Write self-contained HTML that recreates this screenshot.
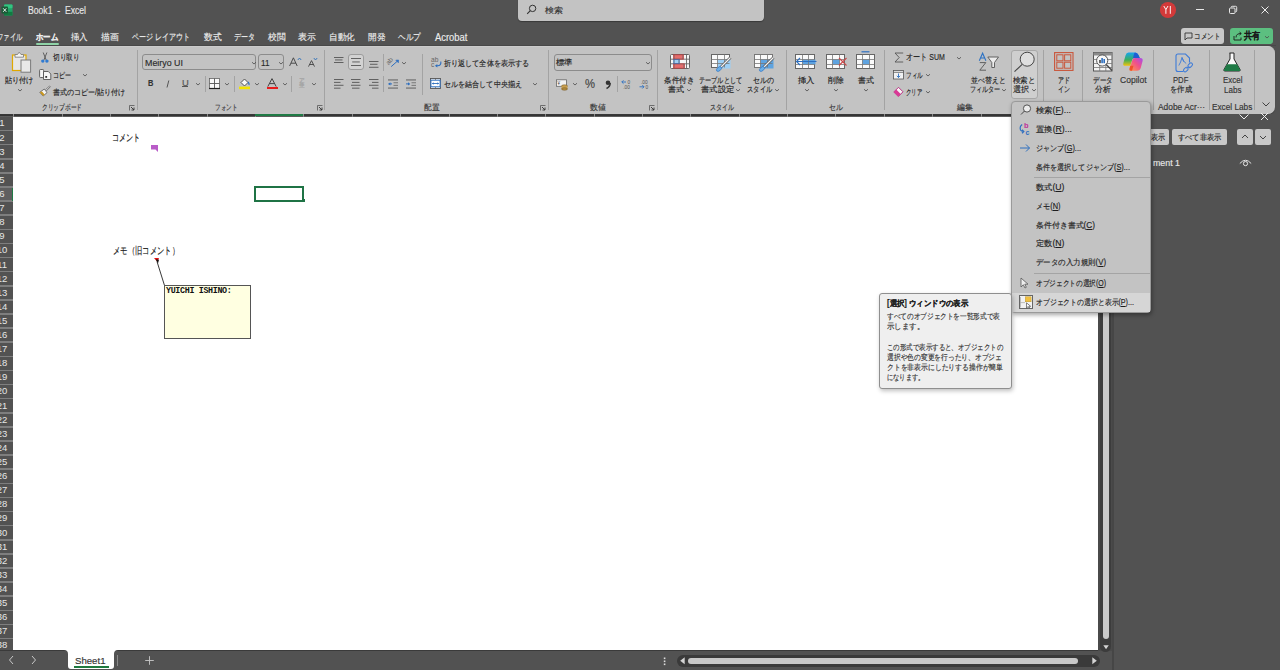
<!DOCTYPE html>
<html><head><meta charset="utf-8">
<style>
*{margin:0;padding:0;box-sizing:border-box}
html,body{width:1280px;height:670px;overflow:hidden;background:#525252;font-family:"Liberation Sans",sans-serif;color:#222}
.a{position:absolute}
.t{position:absolute;white-space:nowrap;transform-origin:0 50%;-webkit-text-stroke:0.15px currentColor}
svg{overflow:visible}
</style></head><body>
<div class="a" style="left:0px;top:0px;width:1280px;height:46px;background:#525252"></div>
<svg class="a" style="left:1px;top:4px;" width="12" height="12" viewBox="0 0 12 12"><rect x="3" y="0.5" width="8.5" height="11" rx="1" fill="#21a366"/>
<rect x="3" y="0.5" width="8.5" height="3.7" rx="1" fill="#33c481"/>
<rect x="3" y="7.8" width="8.5" height="3.7" fill="#107c41"/>
<rect x="0.5" y="2.5" width="6.5" height="7" rx="0.8" fill="#185c37"/>
<path d="M2.2 4.3 L5.3 7.8 M5.3 4.3 L2.2 7.8" stroke="#fff" stroke-width="0.9"/></svg>
<div class="t f" style="left:28.0px;top:5.5px;font-size:10px;line-height:10px;color:#e6e6e6;--w:58.0px;">Book1&nbsp; - &nbsp;Excel</div>
<div class="a" style="left:518px;top:-4px;width:246px;height:25px;background:#c3c3c3;border-radius:4px;box-shadow:0 1px 1px rgba(0,0,0,.3)"></div>
<svg class="a" style="left:526px;top:4px;" width="11" height="11" viewBox="0 0 11 11"><circle cx="6.6" cy="4.4" r="3.2" fill="none" stroke="#333" stroke-width="1"/><path d="M4.3 6.7 L1.2 9.8" stroke="#333" stroke-width="1.1"/></svg>
<div class="t f" style="left:545.0px;top:5.8px;font-size:8.4px;line-height:8.4px;color:#333;--w:18.0px;">検索</div>
<svg class="a" style="left:1159px;top:2px;" width="18" height="18" viewBox="0 0 18 18"><circle cx="9" cy="8" r="8.1" fill="#d33a3a"/></svg>
<svg class="a" style="left:1163px;top:5px;" width="10" height="10" viewBox="0 0 10 10"><path d="M0.8 1 L2.9 4.6 L5 1 M2.9 4.6 V8.8 M7.3 1 V8.8" fill="none" stroke="#fff" stroke-width="0.95"/></svg>
<div class="a" style="left:1196px;top:9px;width:8px;height:1px;background:#e8e8e8"></div>
<svg class="a" style="left:1228px;top:5px;" width="10" height="10" viewBox="0 0 10 10"><rect x="1.5" y="3" width="5.5" height="5.5" rx="1" fill="none" stroke="#e8e8e8" stroke-width="1"/><path d="M3.2 2.5 V2.3 a1 1 0 0 1 1-1 h3.5 a1 1 0 0 1 1 1 v3.5 a1 1 0 0 1 -1 1 h-0.3" fill="none" stroke="#e8e8e8" stroke-width="1"/></svg>
<svg class="a" style="left:1260px;top:5px;" width="10" height="10" viewBox="0 0 10 10"><path d="M1.5 1.5 L8.5 8.5 M8.5 1.5 L1.5 8.5" stroke="#eee" stroke-width="1"/></svg>
<div class="t f" style="left:-3.0px;top:33.0px;font-size:9px;line-height:9px;color:#ececec;--w:25.5px;">ファイル</div>
<div class="t f" style="left:35.6px;top:33.0px;font-size:9px;line-height:9px;color:#ececec;font-weight:bold;--w:22.2px;">ホーム</div>
<div class="t f" style="left:70.9px;top:33.0px;font-size:9px;line-height:9px;color:#ececec;--w:16.9px;">挿入</div>
<div class="t f" style="left:100.9px;top:33.0px;font-size:9px;line-height:9px;color:#ececec;--w:17.6px;">描画</div>
<div class="t f" style="left:131.6px;top:33.0px;font-size:9px;line-height:9px;color:#ececec;--w:58.2px;">ページ レイアウト</div>
<div class="t f" style="left:204.0px;top:33.0px;font-size:9px;line-height:9px;color:#ececec;--w:17.6px;">数式</div>
<div class="t f" style="left:234.2px;top:33.0px;font-size:9px;line-height:9px;color:#ececec;--w:21.1px;">データ</div>
<div class="t f" style="left:268.4px;top:33.0px;font-size:9px;line-height:9px;color:#ececec;--w:17.5px;">校閲</div>
<div class="t f" style="left:298.4px;top:33.0px;font-size:9px;line-height:9px;color:#ececec;--w:17.8px;">表示</div>
<div class="t f" style="left:329.4px;top:33.0px;font-size:9px;line-height:9px;color:#ececec;--w:25.8px;">自動化</div>
<div class="t f" style="left:368.4px;top:33.0px;font-size:9px;line-height:9px;color:#ececec;--w:17.2px;">開発</div>
<div class="t f" style="left:397.8px;top:33.0px;font-size:9px;line-height:9px;color:#ececec;--w:22.5px;">ヘルプ</div>
<div class="t f" style="left:434.8px;top:32.5px;font-size:10px;line-height:10px;color:#ececec;--w:32.4px;">Acrobat</div>
<div class="a" style="left:36px;top:43px;width:23px;height:1.6px;background:#8fd3a7;border-radius:1px"></div>
<div class="a" style="left:1181px;top:28px;width:43px;height:16px;background:#c8c8c8;border-radius:3px"></div>
<svg class="a" style="left:1184px;top:32px;" width="9" height="9" viewBox="0 0 9 9"><path d="M1 1 H8 V6 H3 L1 8 Z" fill="none" stroke="#333" stroke-width="0.9"/></svg>
<div class="t f" style="left:1194.0px;top:31.8px;font-size:8.4px;line-height:8.4px;color:#222;--w:26.0px;">コメント</div>
<div class="a" style="left:1230px;top:28px;width:43px;height:16px;background:#5cbf80;border-radius:3px"></div>
<svg class="a" style="left:1233px;top:31px;" width="10" height="10" viewBox="0 0 10 10"><path d="M1 5 V9 H8 V6.5" fill="none" stroke="#1a1a1a" stroke-width="0.9"/><path d="M3 6.5 C3 3.5 5 2.5 8 2.5 M6.5 1 L8.3 2.5 L6.5 4" fill="none" stroke="#1a1a1a" stroke-width="0.9"/></svg>
<div class="t f" style="left:1244.0px;top:31.2px;font-size:9.5px;line-height:9.5px;color:#1a1a1a;font-weight:bold;--w:16.0px;">共有</div>
<svg class="a" style="left:1264.0px;top:34.5px;" width="6" height="4" viewBox="0 0 6 4"><path d="M1 1.2 L3.0 3 L5 1.2" fill="none" stroke="#4a4a4a" stroke-width="0.8"/></svg>
<div class="a" style="left:0px;top:45px;width:1276px;height:1px;background:#484848"></div>
<div class="a" style="left:-8px;top:46px;width:1283px;height:68px;background:#c3c3c3;border-top:1px solid #cbcbcb;border-radius:7px;box-shadow:0 1px 1px rgba(0,0,0,.25)"></div>
<div class="a" style="left:137px;top:50px;width:1px;height:60px;background:#a3a3a3"></div>
<div class="a" style="left:324px;top:50px;width:1px;height:60px;background:#a3a3a3"></div>
<div class="a" style="left:548px;top:50px;width:1px;height:60px;background:#a3a3a3"></div>
<div class="a" style="left:657px;top:50px;width:1px;height:60px;background:#a3a3a3"></div>
<div class="a" style="left:786px;top:50px;width:1px;height:60px;background:#a3a3a3"></div>
<div class="a" style="left:884px;top:50px;width:1px;height:60px;background:#a3a3a3"></div>
<div class="a" style="left:1043px;top:50px;width:1px;height:60px;background:#a3a3a3"></div>
<div class="a" style="left:1082px;top:50px;width:1px;height:60px;background:#a3a3a3"></div>
<div class="a" style="left:1153px;top:50px;width:1px;height:60px;background:#a3a3a3"></div>
<div class="a" style="left:1209px;top:50px;width:1px;height:60px;background:#a3a3a3"></div>
<div class="a" style="left:1254px;top:50px;width:1px;height:60px;background:#a3a3a3"></div>
<div class="a" style="left:383px;top:54px;width:1px;height:17px;background:#a3a3a3"></div>
<div class="a" style="left:383px;top:76px;width:1px;height:16px;background:#a3a3a3"></div>
<div class="a" style="left:422px;top:54px;width:1px;height:41px;background:#a3a3a3"></div>
<div class="a" style="left:205px;top:76px;width:1px;height:16px;background:#a3a3a3"></div>
<div class="a" style="left:234px;top:76px;width:1px;height:16px;background:#a3a3a3"></div>
<div class="a" style="left:291px;top:76px;width:1px;height:16px;background:#a3a3a3"></div>
<div class="a" style="left:617px;top:76px;width:1px;height:16px;background:#a3a3a3"></div>
<div class="t f" style="left:42.2px;top:102.8px;font-size:8.4px;line-height:8.4px;color:#333;--w:40.1px;">クリップボード</div>
<div class="t f" style="left:214.5px;top:102.8px;font-size:8.4px;line-height:8.4px;color:#333;--w:22.3px;">フォント</div>
<div class="t f" style="left:423.7px;top:102.8px;font-size:8.4px;line-height:8.4px;color:#333;--w:15.3px;">配置</div>
<div class="t f" style="left:590.0px;top:102.8px;font-size:8.4px;line-height:8.4px;color:#333;--w:15.7px;">数値</div>
<div class="t f" style="left:710.2px;top:102.8px;font-size:8.4px;line-height:8.4px;color:#333;--w:24.0px;">スタイル</div>
<div class="t f" style="left:829.0px;top:102.8px;font-size:8.4px;line-height:8.4px;color:#333;--w:13.9px;">セル</div>
<div class="t f" style="left:956.6px;top:102.8px;font-size:8.4px;line-height:8.4px;color:#333;--w:15.9px;">編集</div>
<div class="t f" style="left:1158.1px;top:102.8px;font-size:8.4px;line-height:8.4px;color:#333;--w:47.1px;">Adobe Acr···</div>
<div class="t f" style="left:1211.9px;top:102.8px;font-size:8.4px;line-height:8.4px;color:#333;--w:40.3px;">Excel Labs</div>
<svg class="a" style="left:129px;top:104.5px;" width="6" height="6" viewBox="0 0 6 6"><path d="M0.5 5.5 V0.5 H5.5" fill="none" stroke="#555" stroke-width="0.8"/><path d="M2 2 L5 5 M5 2.5 V5 H2.5" fill="none" stroke="#333" stroke-width="0.9"/></svg>
<svg class="a" style="left:317px;top:104.5px;" width="6" height="6" viewBox="0 0 6 6"><path d="M0.5 5.5 V0.5 H5.5" fill="none" stroke="#555" stroke-width="0.8"/><path d="M2 2 L5 5 M5 2.5 V5 H2.5" fill="none" stroke="#333" stroke-width="0.9"/></svg>
<svg class="a" style="left:540px;top:104.5px;" width="6" height="6" viewBox="0 0 6 6"><path d="M0.5 5.5 V0.5 H5.5" fill="none" stroke="#555" stroke-width="0.8"/><path d="M2 2 L5 5 M5 2.5 V5 H2.5" fill="none" stroke="#333" stroke-width="0.9"/></svg>
<svg class="a" style="left:649px;top:104.5px;" width="6" height="6" viewBox="0 0 6 6"><path d="M0.5 5.5 V0.5 H5.5" fill="none" stroke="#555" stroke-width="0.8"/><path d="M2 2 L5 5 M5 2.5 V5 H2.5" fill="none" stroke="#333" stroke-width="0.9"/></svg>
<svg class="a" style="left:1261.5px;top:101.5px;" width="8" height="5" viewBox="0 0 8 5"><path d="M0.5 0.5 L4 4 L7.5 0.5" fill="none" stroke="#333" stroke-width="0.9"/></svg>
<svg class="a" style="left:11px;top:51px;" width="21" height="22" viewBox="0 0 21 22"><rect x="1.5" y="4" width="13.5" height="15.5" fill="#e6e6e6" stroke="#e0a800" stroke-width="1.2"/>
<path d="M4 6.2 V3.5 H6.5 L8.2 1.2 L10 3.5 H12.5 V6.2 Z" fill="#f4f4f4" stroke="#777" stroke-width="0.8"/>
<rect x="10" y="9" width="9.6" height="12.2" fill="#e8e8e8" stroke="#7a7a7a" stroke-width="1"/></svg>
<div class="t f" style="left:5.1px;top:76.1px;font-size:8.4px;line-height:8.4px;color:#1e1e1e;--w:28.4px;">貼り付け</div>
<svg class="a" style="left:17.4px;top:88.3px;" width="6" height="4" viewBox="0 0 6 4"><path d="M1 1.2 L3.0 3 L5 1.2" fill="none" stroke="#4a4a4a" stroke-width="0.8"/></svg>
<svg class="a" style="left:40px;top:52px;" width="10" height="11" viewBox="0 0 10 11"><path d="M3.2 0.5 L6.2 8 M6.9 0.5 L3.9 8" stroke="#555" stroke-width="0.9"/><circle cx="2.8" cy="9.1" r="1.7" fill="#2f7ad1"/><circle cx="6.9" cy="9.1" r="1.7" fill="#2f7ad1"/></svg>
<div class="t f" style="left:53.3px;top:53.4px;font-size:8.4px;line-height:8.4px;color:#1e1e1e;--w:26.7px;">切り取り</div>
<svg class="a" style="left:39px;top:69px;" width="13" height="11" viewBox="0 0 13 11"><rect x="0.6" y="0.5" width="4" height="8" rx="0.8" fill="#f6f6f6" stroke="#555" stroke-width="0.9"/><path d="M4.5 2.5 H9.3 L11.8 5 V10.5 H4.5 Z" fill="#f6f6f6" stroke="#555" stroke-width="0.9"/><rect x="6.3" y="7" width="1.8" height="1.8" fill="#333"/></svg>
<div class="t f" style="left:52.8px;top:70.8px;font-size:8.4px;line-height:8.4px;color:#1e1e1e;--w:18.1px;">コピー</div>
<svg class="a" style="left:82.0px;top:72.5px;" width="6" height="4" viewBox="0 0 6 4"><path d="M1 1.2 L3.0 3 L5 1.2" fill="none" stroke="#4a4a4a" stroke-width="0.8"/></svg>
<svg class="a" style="left:39px;top:85px;" width="12" height="12" viewBox="0 0 12 12"><path d="M0.8 7.3 L5.3 4 L8 7.6 L4.2 11 Z" fill="#f5f5f5" stroke="#555" stroke-width="0.8"/><path d="M0.9 7.5 L2.8 6.2 L5.6 9.6 L4.2 11 Z" fill="#c8961e"/><path d="M6.3 5 L10.5 1 L11.3 1.8 L7.2 6" fill="#fafafa" stroke="#555" stroke-width="0.8"/></svg>
<div class="t f" style="left:53.3px;top:87.7px;font-size:8.4px;line-height:8.4px;color:#1e1e1e;--w:72.1px;">書式のコピー/貼り付け</div>
<div class="a" style="left:142.4px;top:54.3px;width:114.1px;height:16.2px;border:1px solid #8c8c8c;border-radius:3px"></div>
<div class="t f" style="left:144.8px;top:57.6px;font-size:9.4px;line-height:9.4px;color:#2a2a2a;--w:37.9px;">Meiryo UI</div>
<svg class="a" style="left:250.5px;top:60.5px;" width="6" height="4" viewBox="0 0 6 4"><path d="M1 1.2 L3.0 3 L5 1.2" fill="none" stroke="#4a4a4a" stroke-width="0.8"/></svg>
<div class="a" style="left:258.3px;top:54.3px;width:26.2px;height:16.2px;border:1px solid #8c8c8c;border-radius:3px"></div>
<div class="t f" style="left:260.6px;top:57.6px;font-size:9.4px;line-height:9.4px;color:#2a2a2a;--w:8.4px;">11</div>
<svg class="a" style="left:277.5px;top:60.5px;" width="6" height="4" viewBox="0 0 6 4"><path d="M1 1.2 L3.0 3 L5 1.2" fill="none" stroke="#4a4a4a" stroke-width="0.8"/></svg>
<svg class="a" style="left:289px;top:57px;" width="9" height="10" viewBox="0 0 9 10"><path d="M0.6 9 L4.4 0.8 L8.2 9 M2 6.2 H6.8" fill="none" stroke="#444" stroke-width="0.95"/></svg>
<svg class="a" style="left:297px;top:57px;" width="5" height="4" viewBox="0 0 5 4"><path d="M0.8 3 L2.5 1 L4.2 3" fill="none" stroke="#2f6fb8" stroke-width="0.9"/></svg>
<svg class="a" style="left:308px;top:59.5px;" width="7" height="7" viewBox="0 0 7 7"><path d="M0.5 6.6 L3.5 0.6 L6.5 6.6 M1.6 4.5 H5.4" fill="none" stroke="#444" stroke-width="0.9"/></svg>
<svg class="a" style="left:313px;top:57px;" width="5" height="4" viewBox="0 0 5 4"><path d="M0.8 1 L2.5 3 L4.2 1" fill="none" stroke="#2f6fb8" stroke-width="0.9"/></svg>
<div class="t f" style="left:148.0px;top:79.1px;font-size:8.4px;line-height:8.4px;color:#333;font-weight:bold;--w:5.4px;">B</div>
<svg class="a" style="left:165px;top:79.5px;" width="6" height="8" viewBox="0 0 6 8"><path d="M3.8 0.5 L2 7.5" stroke="#555" stroke-width="1"/></svg>
<div class="t f" style="left:181.5px;top:78.5px;font-size:8.5px;line-height:8.5px;color:#555;--w:6.8px;">U</div>
<div class="a" style="left:181.5px;top:86.3px;width:6.8px;height:0.9px;background:#555"></div>
<svg class="a" style="left:194.7px;top:81.5px;" width="6" height="4" viewBox="0 0 6 4"><path d="M1 1.2 L3.0 3 L5 1.2" fill="none" stroke="#4a4a4a" stroke-width="0.8"/></svg>
<svg class="a" style="left:209px;top:78px;" width="11" height="11" viewBox="0 0 11 11"><rect x="0.5" y="0.5" width="10" height="10" fill="#fafafa" stroke="#555" stroke-width="0.7"/><path d="M5.5 0.5 V10.5 M0.5 5.5 H10.5" stroke="#555" stroke-width="0.9"/><path d="M0 10.5 H11" stroke="#222" stroke-width="1.2"/></svg>
<svg class="a" style="left:223.5px;top:81.5px;" width="6" height="4" viewBox="0 0 6 4"><path d="M1 1.2 L3.0 3 L5 1.2" fill="none" stroke="#4a4a4a" stroke-width="0.8"/></svg>
<svg class="a" style="left:239px;top:77px;" width="12" height="13" viewBox="0 0 12 13"><path d="M2 5.5 L5.5 2 L9 5.5 L5.5 9 Z" fill="#f8f8f8" stroke="#444" stroke-width="0.9"/><path d="M9 5 Q10.5 6.5 10 8" fill="none" stroke="#2d6fc0" stroke-width="1.2"/><rect x="0" y="9.6" width="11" height="2.6" fill="#f4e400"/></svg>
<svg class="a" style="left:254.0px;top:81.5px;" width="6" height="4" viewBox="0 0 6 4"><path d="M1 1.2 L3.0 3 L5 1.2" fill="none" stroke="#4a4a4a" stroke-width="0.8"/></svg>
<svg class="a" style="left:267px;top:77.5px;" width="10" height="9" viewBox="0 0 10 9"><path d="M0.8 8.6 L5 0.6 L9.2 8.6 M2.4 5.6 H7.6" fill="none" stroke="#444" stroke-width="1"/></svg>
<div class="a" style="left:266.6px;top:86.6px;width:11.1px;height:2.6px;background:#e81c1c"></div>
<svg class="a" style="left:281.5px;top:81.5px;" width="6" height="4" viewBox="0 0 6 4"><path d="M1 1.2 L3.0 3 L5 1.2" fill="none" stroke="#4a4a4a" stroke-width="0.8"/></svg>
<div class="t f" style="left:298.9px;top:78.0px;font-size:5px;line-height:5px;color:#9c9c9c;--w:5.7px;">ア</div>
<div class="t f" style="left:298.9px;top:83.2px;font-size:5.5px;line-height:5.5px;color:#9c9c9c;--w:5.7px;">亜</div>
<svg class="a" style="left:311.0px;top:81.5px;" width="6" height="4" viewBox="0 0 6 4"><path d="M1 1.2 L3.0 3 L5 1.2" fill="none" stroke="#4a4a4a" stroke-width="0.8"/></svg>
<svg class="a" style="left:334px;top:57px;" width="10" height="7" viewBox="0 0 10 7"><rect x="0" y="0" width="9.5" height="0.9" fill="#555"/><rect x="1" y="2.5" width="7.5" height="0.9" fill="#555"/><rect x="0" y="5" width="9.5" height="0.9" fill="#555"/></svg>
<div class="a" style="left:348.3px;top:54.1px;width:15.6px;height:16.2px;background:#d2d2d2;border:1px solid #9c9c9c;border-radius:3px"></div>
<svg class="a" style="left:351px;top:58px;" width="10" height="9" viewBox="0 0 10 9"><rect x="0" y="0" width="10" height="0.9" fill="#555"/><rect x="1.2" y="3.5" width="7.6" height="0.9" fill="#555"/><rect x="0" y="7" width="10" height="0.9" fill="#555"/></svg>
<svg class="a" style="left:369px;top:61px;" width="10" height="7" viewBox="0 0 10 7"><rect x="0" y="0" width="9.5" height="0.9" fill="#555"/><rect x="1" y="2.8" width="7.5" height="0.9" fill="#555"/><rect x="0" y="5.8" width="9.5" height="0.9" fill="#555"/></svg>
<svg class="a" style="left:386px;top:55px;" width="14" height="13" viewBox="0 0 14 13"><text x="0" y="0" font-size="6.5" font-family="Liberation Sans" fill="#666" transform="translate(2.8,10.2) rotate(-50)">ab</text><path d="M5.2 11.6 L12 5.6" stroke="#2d6fc0" stroke-width="1"/><path d="M9.8 5.2 L12.6 5 L12.4 7.8 Z" fill="#2d6fc0" stroke="#2d6fc0" stroke-width="0.6"/></svg>
<svg class="a" style="left:401.3px;top:60.5px;" width="6" height="4" viewBox="0 0 6 4"><path d="M1 1.2 L3.0 3 L5 1.2" fill="none" stroke="#4a4a4a" stroke-width="0.8"/></svg>
<svg class="a" style="left:334px;top:78.5px;" width="10" height="10" viewBox="0 0 10 10"><rect x="0" y="0.0" width="9.5" height="0.9" fill="#555"/><rect x="0" y="2.9" width="6.5" height="0.9" fill="#555"/><rect x="0" y="5.8" width="9.5" height="0.9" fill="#555"/><rect x="0" y="8.7" width="6.5" height="0.9" fill="#555"/></svg>
<svg class="a" style="left:351px;top:78.5px;" width="10" height="10" viewBox="0 0 10 10"><rect x="0.0" y="0.0" width="9.5" height="0.9" fill="#555"/><rect x="1" y="2.9" width="7.5" height="0.9" fill="#555"/><rect x="0.0" y="5.8" width="9.5" height="0.9" fill="#555"/><rect x="1" y="8.7" width="7.5" height="0.9" fill="#555"/></svg>
<svg class="a" style="left:369px;top:78.5px;" width="10" height="10" viewBox="0 0 10 10"><rect x="0.0" y="0.0" width="9.5" height="0.9" fill="#555"/><rect x="3.0" y="2.9" width="6.5" height="0.9" fill="#555"/><rect x="0.0" y="5.8" width="9.5" height="0.9" fill="#555"/><rect x="3.0" y="8.7" width="6.5" height="0.9" fill="#555"/></svg>
<svg class="a" style="left:388px;top:78.5px;" width="11" height="10" viewBox="0 0 11 10"><rect x="0" y="0.5" width="10" height="0.9" fill="#555"/><rect x="5.5" y="3.4" width="4.5" height="0.8" fill="#666"/><rect x="5.5" y="5.9" width="4.5" height="0.8" fill="#666"/><rect x="0" y="8.6" width="10" height="0.9" fill="#555"/><path d="M0.6 4.9 H4" stroke="#2d6fc0" stroke-width="1"/><path d="M0.2 4.9 L2.4 3.2 V6.6 Z" fill="#2d6fc0"/></svg>
<svg class="a" style="left:405.5px;top:78.5px;" width="11" height="10" viewBox="0 0 11 10"><rect x="0" y="0.5" width="10" height="0.9" fill="#555"/><rect x="5.5" y="3.4" width="4.5" height="0.8" fill="#666"/><rect x="5.5" y="5.9" width="4.5" height="0.8" fill="#666"/><rect x="0" y="8.6" width="10" height="0.9" fill="#555"/><path d="M0 4.9 H3.4" stroke="#2d6fc0" stroke-width="1"/><path d="M4.2 4.9 L2 3.2 V6.6 Z" fill="#2d6fc0"/></svg>
<svg class="a" style="left:431px;top:56px;" width="12" height="12" viewBox="0 0 12 12"><text x="0" y="6" font-size="6.6" font-family="Liberation Sans" fill="#666">ab</text><text x="0" y="11" font-size="6.6" font-family="Liberation Sans" fill="#666">c</text><path d="M9.8 5.5 Q10.5 9.5 6.5 9.8 H4.8" fill="none" stroke="#2d6fc0" stroke-width="1.1"/><path d="M4 9.8 L6.3 8 V11.6 Z" fill="#2d6fc0"/></svg>
<div class="t f" style="left:443.5px;top:58.6px;font-size:8.4px;line-height:8.4px;color:#1e1e1e;--w:85.0px;">折り返して全体を表示する</div>
<svg class="a" style="left:430px;top:78px;" width="11" height="11" viewBox="0 0 11 11"><rect x="0.5" y="0.5" width="10" height="10" fill="#f4f4f4" stroke="#555" stroke-width="0.9"/><rect x="0.9" y="2.2" width="9.2" height="6.6" fill="#fff" stroke="#2d6fc0" stroke-width="1"/><path d="M5.5 0.5 V2 M5.5 9 V10.5" stroke="#555" stroke-width="0.6"/><path d="M2.3 5.5 H8.7" stroke="#2d6fc0" stroke-width="0.9"/><path d="M2 5.5 L3.6 4.2 V6.8 Z M9 5.5 L7.4 4.2 V6.8 Z" fill="#2d6fc0"/></svg>
<div class="t f" style="left:443.5px;top:79.7px;font-size:8.4px;line-height:8.4px;color:#1e1e1e;--w:77.8px;">セルを結合して中央揃え</div>
<svg class="a" style="left:532.0px;top:82px;" width="6" height="4" viewBox="0 0 6 4"><path d="M1 1.2 L3.0 3 L5 1.2" fill="none" stroke="#4a4a4a" stroke-width="0.8"/></svg>
<div class="a" style="left:554.2px;top:54px;width:98.2px;height:16.6px;border:1px solid #8c8c8c;border-radius:3px"></div>
<div class="t f" style="left:556.0px;top:58.1px;font-size:8.4px;line-height:8.4px;color:#1e1e1e;--w:16.6px;">標準</div>
<svg class="a" style="left:645.0px;top:60.5px;" width="6" height="4" viewBox="0 0 6 4"><path d="M1 1.2 L3.0 3 L5 1.2" fill="none" stroke="#4a4a4a" stroke-width="0.8"/></svg>
<svg class="a" style="left:556px;top:79px;" width="13" height="11" viewBox="0 0 13 11"><rect x="0.5" y="0.8" width="10" height="6.5" fill="#f2f2f2" stroke="#666" stroke-width="0.8"/><text x="1.5" y="6" font-size="4.5" font-family="Liberation Sans" fill="#444">¥</text><ellipse cx="8.5" cy="7" rx="3" ry="1.2" fill="#c8a050" stroke="#6b5020" stroke-width="0.5"/><rect x="5.5" y="7" width="6" height="3" fill="#c8a050"/><ellipse cx="8.5" cy="10" rx="3" ry="1.2" fill="#b8903f" stroke="#6b5020" stroke-width="0.5"/></svg>
<svg class="a" style="left:571.5px;top:81.5px;" width="6" height="4" viewBox="0 0 6 4"><path d="M1 1.2 L3.0 3 L5 1.2" fill="none" stroke="#4a4a4a" stroke-width="0.8"/></svg>
<div class="t f" style="left:584.9px;top:77.7px;font-size:12px;line-height:12px;color:#444;--w:10.0px;">%</div>
<svg class="a" style="left:605px;top:80px;" width="6" height="9" viewBox="0 0 6 9"><circle cx="3" cy="2.8" r="2.3" fill="#333"/><path d="M5.2 3 Q5.2 6.8 1.5 8.5" fill="none" stroke="#333" stroke-width="1.5"/></svg>
<svg class="a" style="left:620.8px;top:79px;" width="12" height="10" viewBox="0 0 12 10"><path d="M0.8 3 H5 M2.5 1.3 L0.8 3 L2.5 4.7" fill="none" stroke="#2d6fc0" stroke-width="0.9"/><text x="6.5" y="4.5" font-size="4.8" font-family="Liberation Sans" fill="#555">0</text><text x="2.2" y="9.8" font-size="4.8" font-family="Liberation Sans" fill="#555">.00</text></svg>
<svg class="a" style="left:639px;top:79px;" width="12" height="10" viewBox="0 0 12 10"><text x="2" y="4.5" font-size="4.8" font-family="Liberation Sans" fill="#555">.00</text><path d="M0.5 7.8 H5 M3.3 6.1 L5 7.8 L3.3 9.5" fill="none" stroke="#2d6fc0" stroke-width="0.9"/><text x="6.5" y="9.8" font-size="4.8" font-family="Liberation Sans" fill="#555">0</text></svg>
<svg class="a" style="left:670px;top:54px;" width="20" height="15" viewBox="0 0 20 15"><rect x="0.5" y="0.5" width="19" height="14" rx="1" fill="#f6f6f6" stroke="#666" stroke-width="1"/><rect x="4" y="1" width="9" height="4" fill="#e46c6c"/><rect x="4" y="5.5" width="5" height="4" fill="#9dd0f5"/><rect x="4" y="10" width="10" height="4" fill="#e46c6c"/><path d="M4 0.5 V14.5 M13 0.5 V5 M9 5 V10 M14 10 V14.5 M16.5 0.5 V14.5 M0.5 5.2 H19.5 M0.5 9.8 H19.5" stroke="#666" stroke-width="0.9"/><rect x="3.5" y="0.8" width="10" height="4.4" fill="none" stroke="#c23b3b" stroke-width="0.7"/><rect x="3.5" y="9.8" width="11" height="4.4" fill="none" stroke="#c23b3b" stroke-width="0.7"/><rect x="3.8" y="5.3" width="5.4" height="4.4" fill="none" stroke="#2d6fc0" stroke-width="0.6"/></svg>
<div class="t f" style="left:664.3px;top:75.6px;font-size:8.4px;line-height:8.4px;color:#1e1e1e;--w:30.2px;">条件付き</div>
<div class="t f" style="left:668.0px;top:85.4px;font-size:8.4px;line-height:8.4px;color:#1e1e1e;--w:16.0px;">書式</div>
<svg class="a" style="left:685.8px;top:87.8px;" width="6" height="4" viewBox="0 0 6 4"><path d="M1 1.2 L3.0 3 L5 1.2" fill="none" stroke="#4a4a4a" stroke-width="0.8"/></svg>
<svg class="a" style="left:711px;top:54px;" width="21" height="17" viewBox="0 0 21 17"><rect x="0.5" y="0.5" width="18" height="13" fill="#fafafa" stroke="#666" stroke-width="1"/><rect x="6.5" y="5.5" width="13.0" height="9.0" fill="#9ccff5"/><path d="M6.5 0.5 V13.5" stroke="#777" stroke-width="0.8"/><path d="M13.5 0.5 V13.5" stroke="#777" stroke-width="0.8"/><path d="M0.5 5.5 H18.5" stroke="#777" stroke-width="0.8"/><path d="M0.5 9.5 H18.5" stroke="#777" stroke-width="0.8"/><path d="M19.5 3.5 L9.5 13.5" stroke="#555" stroke-width="2.6"/><path d="M19.5 3.5 L9.5 13.5" stroke="#f4f4f4" stroke-width="1.3"/><ellipse cx="8" cy="15" rx="3" ry="1.8" transform="rotate(-40 8 15)" fill="#6ab0e8" stroke="#2d6fc0" stroke-width="0.6"/></svg>
<div class="t f" style="left:699.3px;top:75.6px;font-size:8.4px;line-height:8.4px;color:#1e1e1e;--w:43.1px;">テーブルとして</div>
<div class="t f" style="left:700.8px;top:85.4px;font-size:8.4px;line-height:8.4px;color:#1e1e1e;--w:33.4px;">書式設定</div>
<svg class="a" style="left:735.0px;top:87.8px;" width="6" height="4" viewBox="0 0 6 4"><path d="M1 1.2 L3.0 3 L5 1.2" fill="none" stroke="#4a4a4a" stroke-width="0.8"/></svg>
<svg class="a" style="left:754px;top:54px;" width="21" height="17" viewBox="0 0 21 17"><rect x="0.5" y="0.5" width="18" height="13" fill="#fafafa" stroke="#777" stroke-width="1"/><rect x="6.5" y="5.5" width="13.0" height="9.0" fill="#5ea3e0"/><path d="M6.5 0.5 V13.5" stroke="#777" stroke-width="0.8"/><path d="M13.5 0.5 V13.5" stroke="#777" stroke-width="0.8"/><path d="M0.5 5.5 H18.5" stroke="#777" stroke-width="0.8"/><path d="M0.5 9.5 H18.5" stroke="#777" stroke-width="0.8"/><path d="M19.5 3.5 L9.5 13.5" stroke="#555" stroke-width="2.6"/><path d="M19.5 3.5 L9.5 13.5" stroke="#f4f4f4" stroke-width="1.3"/><ellipse cx="8" cy="15" rx="3" ry="1.8" transform="rotate(-40 8 15)" fill="#6ab0e8" stroke="#2d6fc0" stroke-width="0.6"/></svg>
<div class="t f" style="left:753.1px;top:75.6px;font-size:8.4px;line-height:8.4px;color:#1e1e1e;--w:20.9px;">セルの</div>
<div class="t f" style="left:746.9px;top:85.4px;font-size:8.4px;line-height:8.4px;color:#1e1e1e;--w:25.1px;">スタイル</div>
<svg class="a" style="left:773.8px;top:87.8px;" width="6" height="4" viewBox="0 0 6 4"><path d="M1 1.2 L3.0 3 L5 1.2" fill="none" stroke="#4a4a4a" stroke-width="0.8"/></svg>
<svg class="a" style="left:795px;top:54px;" width="22" height="15" viewBox="0 0 22 15"><rect x="0.5" y="0.5" width="19" height="14" fill="#fafafa" stroke="#666" stroke-width="1"/><rect x="7.5" y="5.5" width="13.0" height="5.0" fill="#5ea3e0"/><path d="M7.5 0.5 V14.5" stroke="#777" stroke-width="0.8"/><path d="M13.5 0.5 V14.5" stroke="#777" stroke-width="0.8"/><path d="M0.5 5.5 H19.5" stroke="#777" stroke-width="0.8"/><path d="M0.5 10.5 H19.5" stroke="#777" stroke-width="0.8"/><path d="M21.5 7.5 H1.5 M5 4 L1.5 7.5 L5 11" fill="none" stroke="#2d6fc0" stroke-width="1.1"/></svg>
<div class="t f" style="left:797.8px;top:76.3px;font-size:8.4px;line-height:8.4px;color:#1e1e1e;--w:16.6px;">挿入</div>
<svg class="a" style="left:803.5px;top:88.3px;" width="6" height="4" viewBox="0 0 6 4"><path d="M1 1.2 L3.0 3 L5 1.2" fill="none" stroke="#4a4a4a" stroke-width="0.8"/></svg>
<svg class="a" style="left:825.6px;top:54px;" width="21" height="15" viewBox="0 0 21 15"><rect x="0.5" y="0.5" width="18" height="14" fill="#fafafa" stroke="#666" stroke-width="1"/><rect x="6.5" y="5.5" width="7.0" height="5.0" fill="#5ea3e0"/><path d="M6.5 0.5 V14.5" stroke="#777" stroke-width="0.8"/><path d="M13.5 0.5 V14.5" stroke="#777" stroke-width="0.8"/><path d="M0.5 5.5 H18.5" stroke="#777" stroke-width="0.8"/><path d="M0.5 10.5 H18.5" stroke="#777" stroke-width="0.8"/><path d="M13 4 L20.5 11.5 M20.5 4 L13 11.5" stroke="#c94848" stroke-width="1.1"/></svg>
<div class="t f" style="left:828.3px;top:76.3px;font-size:8.4px;line-height:8.4px;color:#1e1e1e;--w:15.6px;">削除</div>
<svg class="a" style="left:833.0px;top:88.3px;" width="6" height="4" viewBox="0 0 6 4"><path d="M1 1.2 L3.0 3 L5 1.2" fill="none" stroke="#4a4a4a" stroke-width="0.8"/></svg>
<svg class="a" style="left:856px;top:51px;" width="19" height="18" viewBox="0 0 19 18"><g transform="translate(0,3)"><rect x="0.5" y="0.5" width="18" height="14" fill="#fafafa" stroke="#666" stroke-width="1"/><rect x="6.5" y="5.5" width="7.0" height="5.0" fill="#5ea3e0"/><path d="M6.5 0.5 V14.5" stroke="#777" stroke-width="0.8"/><path d="M13.5 0.5 V14.5" stroke="#777" stroke-width="0.8"/><path d="M0.5 5.5 H18.5" stroke="#777" stroke-width="0.8"/><path d="M0.5 10.5 H18.5" stroke="#777" stroke-width="0.8"/></g><path d="M5.5 0.8 H13.5" stroke="#2d6fc0" stroke-width="1.2"/></svg>
<div class="t f" style="left:857.5px;top:76.3px;font-size:8.4px;line-height:8.4px;color:#1e1e1e;--w:15.8px;">書式</div>
<svg class="a" style="left:862.5px;top:88.3px;" width="6" height="4" viewBox="0 0 6 4"><path d="M1 1.2 L3.0 3 L5 1.2" fill="none" stroke="#4a4a4a" stroke-width="0.8"/></svg>
<svg class="a" style="left:893.5px;top:51.5px;" width="10" height="11" viewBox="0 0 10 11"><path d="M9.2 1 H1 L5.2 5.5 L1 10 H9.2" fill="none" stroke="#555" stroke-width="0.9"/></svg>
<div class="t f" style="left:906.4px;top:53.3px;font-size:8.8px;line-height:8.8px;color:#262626;--w:38.9px;">オート SUM</div>
<svg class="a" style="left:956.0px;top:55.5px;" width="6" height="4" viewBox="0 0 6 4"><path d="M1 1.2 L3.0 3 L5 1.2" fill="none" stroke="#4a4a4a" stroke-width="0.8"/></svg>
<svg class="a" style="left:893px;top:70px;" width="11" height="10" viewBox="0 0 11 10"><rect x="0.5" y="0.5" width="10" height="8.5" fill="#f2f2f2" stroke="#555" stroke-width="0.8"/><path d="M0.5 2.3 H10.5" stroke="#555" stroke-width="0.8"/><path d="M5.5 3.5 V7.5 M3.8 5.8 L5.5 7.5 L7.2 5.8" fill="none" stroke="#2d6fc0" stroke-width="0.9"/></svg>
<div class="t f" style="left:906.3px;top:70.8px;font-size:8.4px;line-height:8.4px;color:#1e1e1e;--w:16.8px;">フィル</div>
<svg class="a" style="left:925.4px;top:73px;" width="6" height="4" viewBox="0 0 6 4"><path d="M1 1.2 L3.0 3 L5 1.2" fill="none" stroke="#4a4a4a" stroke-width="0.8"/></svg>
<svg class="a" style="left:893px;top:86px;" width="11" height="11" viewBox="0 0 11 11"><path d="M0.8 6 L5.5 1.3 L10 5.8 L5.3 10.5 Z" fill="#f4f4f4" stroke="#b8207a" stroke-width="0.9"/><path d="M0.8 6 L3.2 3.6 L7.7 8.1 L5.3 10.5 Z" fill="#d93a96"/></svg>
<div class="t f" style="left:906.3px;top:87.8px;font-size:8.4px;line-height:8.4px;color:#1e1e1e;--w:16.2px;">クリア</div>
<svg class="a" style="left:925.4px;top:90px;" width="6" height="4" viewBox="0 0 6 4"><path d="M1 1.2 L3.0 3 L5 1.2" fill="none" stroke="#4a4a4a" stroke-width="0.8"/></svg>
<svg class="a" style="left:978px;top:52px;" width="22" height="19" viewBox="0 0 22 19"><path d="M1.3 8.7 L4.6 1.2 L7.9 8.7 M2.5 6 H6.7" fill="none" stroke="#2d72c4" stroke-width="1.1"/><path d="M1.8 10.6 H7.8 L1.8 18.2 H8" fill="none" stroke="#555" stroke-width="0.9"/><path d="M9.8 5 H20.5 L16.5 10.5 V15.5 L13.8 15.5 V10.5 Z" fill="#ececec" stroke="#555" stroke-width="0.9"/></svg>
<div class="t f" style="left:971.3px;top:76.1px;font-size:8.4px;line-height:8.4px;color:#1e1e1e;--w:34.5px;">並べ替えと</div>
<div class="t f" style="left:969.8px;top:85.4px;font-size:8.4px;line-height:8.4px;color:#1e1e1e;--w:30.5px;">フィルター</div>
<svg class="a" style="left:1001.3px;top:87.8px;" width="6" height="4" viewBox="0 0 6 4"><path d="M1 1.2 L3.0 3 L5 1.2" fill="none" stroke="#4a4a4a" stroke-width="0.8"/></svg>
<div class="a" style="left:1010.5px;top:49.7px;width:27.8px;height:49.5px;background:#cfcfcf;border:1px solid #a8a8a8;border-radius:3px"></div>
<svg class="a" style="left:1013px;top:50px;" width="23" height="23" viewBox="0 0 23 23"><circle cx="14.2" cy="9.2" r="7" fill="#dedede" stroke="#444" stroke-width="1"/><path d="M9.2 14.3 L1.5 21.6" stroke="#444" stroke-width="1.1"/></svg>
<div class="t f" style="left:1013.0px;top:76.1px;font-size:8.4px;line-height:8.4px;color:#1e1e1e;--w:22.4px;">検索と</div>
<div class="t f" style="left:1012.5px;top:85.4px;font-size:8.4px;line-height:8.4px;color:#1e1e1e;--w:16.2px;">選択</div>
<svg class="a" style="left:1030.8px;top:87.8px;" width="6" height="4" viewBox="0 0 6 4"><path d="M1 1.2 L3.0 3 L5 1.2" fill="none" stroke="#4a4a4a" stroke-width="0.8"/></svg>
<svg class="a" style="left:1054px;top:52px;" width="20" height="19" viewBox="0 0 20 19"><rect x="0.6" y="0.6" width="18.4" height="17.8" fill="none" stroke="#c9553a" stroke-width="1.1"/><rect x="2.8" y="2.8" width="6.2" height="6" fill="none" stroke="#c9553a" stroke-width="1"/><rect x="10.6" y="2.8" width="6.2" height="6" fill="none" stroke="#c9553a" stroke-width="1"/><rect x="2.8" y="10.2" width="6.2" height="6" fill="none" stroke="#c9553a" stroke-width="1"/><rect x="10.6" y="10.2" width="6.2" height="6" fill="none" stroke="#c9553a" stroke-width="1"/></svg>
<div class="t f" style="left:1057.8px;top:76.1px;font-size:8.4px;line-height:8.4px;color:#1e1e1e;--w:12.1px;">アド</div>
<div class="t f" style="left:1057.8px;top:85.4px;font-size:8.4px;line-height:8.4px;color:#1e1e1e;--w:12.1px;">イン</div>
<svg class="a" style="left:1092.8px;top:52px;" width="20" height="20" viewBox="0 0 20 20"><rect x="0.5" y="0.5" width="18.5" height="18.5" fill="#f4f4f4" stroke="#555" stroke-width="1"/><rect x="0.5" y="0.5" width="18.5" height="3" fill="#8a8a8a"/><path d="M6.7 3.5 V19 M12.8 3.5 V19 M0.5 7.5 H19 M0.5 11.5 H19 M0.5 15.5 H19" stroke="#777" stroke-width="0.8"/><circle cx="9.2" cy="8.5" r="5.6" fill="#f8f8f8" stroke="#555" stroke-width="1"/><rect x="6.2" y="8" width="1.6" height="3.2" fill="#444"/><rect x="8.3" y="6" width="1.6" height="5.2" fill="#2d6fc0"/><rect x="10.4" y="7" width="1.6" height="4.2" fill="#2d6fc0"/><path d="M13.2 12.5 L19 18.5" stroke="#444" stroke-width="1.3"/></svg>
<div class="t f" style="left:1092.7px;top:76.1px;font-size:8.4px;line-height:8.4px;color:#1e1e1e;--w:19.5px;">データ</div>
<div class="t f" style="left:1094.7px;top:85.4px;font-size:8.4px;line-height:8.4px;color:#1e1e1e;--w:15.5px;">分析</div>
<svg class="a" style="left:1123px;top:52px;" width="20" height="19" viewBox="0 0 20 19"><defs><linearGradient id="cg1" x1="0" y1="0" x2="0" y2="1"><stop offset="0" stop-color="#15a4f2"/><stop offset="0.55" stop-color="#3cae5c"/><stop offset="1" stop-color="#f3c20c"/></linearGradient>
<linearGradient id="cg2" x1="1" y1="0" x2="0" y2="1"><stop offset="0" stop-color="#a24cf0"/><stop offset="0.45" stop-color="#f0508a"/><stop offset="1" stop-color="#ff9a48"/></linearGradient></defs>
<path d="M5.5 0.5 H12 Q14.5 0.5 15.5 3 L16.8 6 H11.2 Q9.8 6 9.3 7.5 L7.3 13.8 H2 Q-0.2 13.8 0.3 11.2 L2.5 3.5 Q3.3 0.5 5.5 0.5 Z" fill="url(#cg1)"/>
<path d="M12 0.5 Q14.5 0.5 15.5 3 L16.8 6 H11.2 Q10.2 6 9.8 6.8 L11 2 Q11.5 0.5 12 0.5 Z" fill="#1d55d6" opacity="0.9"/>
<path d="M12 6 H17.2 Q20.2 6 19.6 9 L17.8 15.8 Q17 18.8 14 18.8 H7.8 Q6 18.8 6.5 16.8 L9.5 7.8 Q10 6 12 6 Z" fill="url(#cg2)"/>
<path d="M7.3 13.8 H10.5 L9 18.8 H7.8 Q6 18.8 6.5 16.8 Z" fill="#f0502a"/></svg>
<div class="t f" style="left:1119.6px;top:75.2px;font-size:9.5px;line-height:9.5px;color:#333;--w:26.6px;">Copilot</div>
<svg class="a" style="left:1174.5px;top:53px;" width="19" height="20" viewBox="0 0 19 20"><path d="M8.5 18.5 H3 Q1 18.5 1 16.5 V3 Q1 1 3 1 H10.5 L14.5 5 V9.5" fill="none" stroke="#3d7bd8" stroke-width="1.1"/><path d="M3.8 12.5 Q5.8 9.5 7 4.5 Q7.8 8.5 11.2 10.5 M7 4.5 L9 9" fill="none" stroke="#3d7bd8" stroke-width="0.9"/><rect x="-2.6" y="-1.6" width="5.2" height="3.2" rx="1.6" transform="translate(15.2 12.2) rotate(-45)" fill="none" stroke="#3d7bd8" stroke-width="1"/><rect x="-2.6" y="-1.6" width="5.2" height="3.2" rx="1.6" transform="translate(10.8 16.6) rotate(-45)" fill="none" stroke="#3d7bd8" stroke-width="1"/><path d="M11.8 15.6 L14.2 13.2" stroke="#3d7bd8" stroke-width="1"/></svg>
<div class="t f" style="left:1173.3px;top:75.2px;font-size:9.5px;line-height:9.5px;color:#333;--w:15.3px;">PDF</div>
<div class="t f" style="left:1169.8px;top:85.4px;font-size:8.4px;line-height:8.4px;color:#1e1e1e;--w:21.9px;">を作成</div>
<svg class="a" style="left:1223px;top:52px;" width="18" height="20" viewBox="0 0 18 20"><path d="M6.5 1 H11 V7 L17 17.5 Q17.8 19 16 19 H2 Q0.2 19 1 17.5 L7 7 V1" fill="#fafafa" stroke="#222" stroke-width="1"/><path d="M4 12.3 H14 L17 17.5 Q17.8 19 16 19 H2 Q0.2 19 1 17.5 Z" fill="#1e7a45"/></svg>
<div class="t f" style="left:1222.6px;top:75.2px;font-size:9.5px;line-height:9.5px;color:#333;--w:19.5px;">Excel</div>
<div class="t f" style="left:1223.6px;top:84.8px;font-size:9.5px;line-height:9.5px;color:#333;--w:17.4px;">Labs</div>
<div class="a" style="left:0px;top:113.8px;width:1098px;height:3.2px;background:linear-gradient(#3a3a3a 0,#333 60%,#7a7a7a 100%)"></div>
<div class="a" style="left:12.5px;top:114px;width:1px;height:3px;background:#8a8a8a"></div>
<div class="a" style="left:61.5px;top:114px;width:1px;height:3px;background:#8a8a8a"></div>
<div class="a" style="left:109.5px;top:114px;width:1px;height:3px;background:#8a8a8a"></div>
<div class="a" style="left:157.5px;top:114px;width:1px;height:3px;background:#8a8a8a"></div>
<div class="a" style="left:206.5px;top:114px;width:1px;height:3px;background:#8a8a8a"></div>
<div class="a" style="left:254.5px;top:114px;width:1px;height:3px;background:#8a8a8a"></div>
<div class="a" style="left:302.5px;top:114px;width:1px;height:3px;background:#8a8a8a"></div>
<div class="a" style="left:351.5px;top:114px;width:1px;height:3px;background:#8a8a8a"></div>
<div class="a" style="left:399.5px;top:114px;width:1px;height:3px;background:#8a8a8a"></div>
<div class="a" style="left:448.5px;top:114px;width:1px;height:3px;background:#8a8a8a"></div>
<div class="a" style="left:496.5px;top:114px;width:1px;height:3px;background:#8a8a8a"></div>
<div class="a" style="left:544.5px;top:114px;width:1px;height:3px;background:#8a8a8a"></div>
<div class="a" style="left:593.5px;top:114px;width:1px;height:3px;background:#8a8a8a"></div>
<div class="a" style="left:641.5px;top:114px;width:1px;height:3px;background:#8a8a8a"></div>
<div class="a" style="left:689.5px;top:114px;width:1px;height:3px;background:#8a8a8a"></div>
<div class="a" style="left:738.5px;top:114px;width:1px;height:3px;background:#8a8a8a"></div>
<div class="a" style="left:786.5px;top:114px;width:1px;height:3px;background:#8a8a8a"></div>
<div class="a" style="left:834.5px;top:114px;width:1px;height:3px;background:#8a8a8a"></div>
<div class="a" style="left:883.5px;top:114px;width:1px;height:3px;background:#8a8a8a"></div>
<div class="a" style="left:931.5px;top:114px;width:1px;height:3px;background:#8a8a8a"></div>
<div class="a" style="left:980.5px;top:114px;width:1px;height:3px;background:#8a8a8a"></div>
<div class="a" style="left:1028.5px;top:114px;width:1px;height:3px;background:#8a8a8a"></div>
<div class="a" style="left:1076.5px;top:114px;width:1px;height:3px;background:#8a8a8a"></div>
<div class="a" style="left:254.7px;top:114.3px;width:48.7px;height:2px;background:#1f7a45"></div>
<div class="a" style="left:0px;top:117px;width:13px;height:533px;background:#525252"></div>
<div class="a" style="left:0px;top:129.81px;width:13px;height:1.5px;background:#7e7e7e"></div>
<div class="a" style="left:-8.5px;top:116.40px;width:21px;height:13.11px;text-align:center;font-size:9.5px;line-height:13.11px;color:#e6e6e6;overflow:hidden;clip-path:inset(0 0 0 8.5px)">1</div>
<div class="a" style="left:0px;top:143.92000000000002px;width:13px;height:1.5px;background:#7e7e7e"></div>
<div class="a" style="left:-8.5px;top:130.51px;width:21px;height:13.11px;text-align:center;font-size:9.5px;line-height:13.11px;color:#e6e6e6;overflow:hidden;clip-path:inset(0 0 0 8.5px)">2</div>
<div class="a" style="left:0px;top:158.02999999999997px;width:13px;height:1.5px;background:#7e7e7e"></div>
<div class="a" style="left:-8.5px;top:144.62px;width:21px;height:13.11px;text-align:center;font-size:9.5px;line-height:13.11px;color:#e6e6e6;overflow:hidden;clip-path:inset(0 0 0 8.5px)">3</div>
<div class="a" style="left:0px;top:172.14px;width:13px;height:1.5px;background:#7e7e7e"></div>
<div class="a" style="left:-8.5px;top:158.73px;width:21px;height:13.11px;text-align:center;font-size:9.5px;line-height:13.11px;color:#e6e6e6;overflow:hidden;clip-path:inset(0 0 0 8.5px)">4</div>
<div class="a" style="left:0px;top:186.25px;width:13px;height:1.5px;background:#7e7e7e"></div>
<div class="a" style="left:-8.5px;top:172.84px;width:21px;height:13.11px;text-align:center;font-size:9.5px;line-height:13.11px;color:#e6e6e6;overflow:hidden;clip-path:inset(0 0 0 8.5px)">5</div>
<div class="a" style="left:0px;top:187.55px;width:13px;height:14.11px;background:#5f5f5f"></div>
<div class="a" style="left:0px;top:200.36px;width:13px;height:1.5px;background:#7e7e7e"></div>
<div class="a" style="left:-8.5px;top:186.95px;width:21px;height:13.11px;text-align:center;font-size:9.5px;line-height:13.11px;color:#e6e6e6;overflow:hidden;clip-path:inset(0 0 0 8.5px)">6</div>
<div class="a" style="left:0px;top:214.46999999999997px;width:13px;height:1.5px;background:#7e7e7e"></div>
<div class="a" style="left:-8.5px;top:201.06px;width:21px;height:13.11px;text-align:center;font-size:9.5px;line-height:13.11px;color:#e6e6e6;overflow:hidden;clip-path:inset(0 0 0 8.5px)">7</div>
<div class="a" style="left:0px;top:228.57999999999998px;width:13px;height:1.5px;background:#7e7e7e"></div>
<div class="a" style="left:-8.5px;top:215.17px;width:21px;height:13.11px;text-align:center;font-size:9.5px;line-height:13.11px;color:#e6e6e6;overflow:hidden;clip-path:inset(0 0 0 8.5px)">8</div>
<div class="a" style="left:0px;top:242.69px;width:13px;height:1.5px;background:#7e7e7e"></div>
<div class="a" style="left:-8.5px;top:229.28px;width:21px;height:13.11px;text-align:center;font-size:9.5px;line-height:13.11px;color:#e6e6e6;overflow:hidden;clip-path:inset(0 0 0 8.5px)">9</div>
<div class="a" style="left:0px;top:256.8px;width:13px;height:1.5px;background:#7e7e7e"></div>
<div class="a" style="left:-8.5px;top:243.39px;width:21px;height:13.11px;text-align:center;font-size:9.5px;line-height:13.11px;color:#e6e6e6;overflow:hidden;clip-path:inset(0 0 0 8.5px)">10</div>
<div class="a" style="left:0px;top:270.91px;width:13px;height:1.5px;background:#7e7e7e"></div>
<div class="a" style="left:-8.5px;top:257.50px;width:21px;height:13.11px;text-align:center;font-size:9.5px;line-height:13.11px;color:#e6e6e6;overflow:hidden;clip-path:inset(0 0 0 8.5px)">11</div>
<div class="a" style="left:0px;top:285.02px;width:13px;height:1.5px;background:#7e7e7e"></div>
<div class="a" style="left:-8.5px;top:271.61px;width:21px;height:13.11px;text-align:center;font-size:9.5px;line-height:13.11px;color:#e6e6e6;overflow:hidden;clip-path:inset(0 0 0 8.5px)">12</div>
<div class="a" style="left:0px;top:299.13px;width:13px;height:1.5px;background:#7e7e7e"></div>
<div class="a" style="left:-8.5px;top:285.72px;width:21px;height:13.11px;text-align:center;font-size:9.5px;line-height:13.11px;color:#e6e6e6;overflow:hidden;clip-path:inset(0 0 0 8.5px)">13</div>
<div class="a" style="left:0px;top:313.24px;width:13px;height:1.5px;background:#7e7e7e"></div>
<div class="a" style="left:-8.5px;top:299.83px;width:21px;height:13.11px;text-align:center;font-size:9.5px;line-height:13.11px;color:#e6e6e6;overflow:hidden;clip-path:inset(0 0 0 8.5px)">14</div>
<div class="a" style="left:0px;top:327.34999999999997px;width:13px;height:1.5px;background:#7e7e7e"></div>
<div class="a" style="left:-8.5px;top:313.94px;width:21px;height:13.11px;text-align:center;font-size:9.5px;line-height:13.11px;color:#e6e6e6;overflow:hidden;clip-path:inset(0 0 0 8.5px)">15</div>
<div class="a" style="left:0px;top:341.46px;width:13px;height:1.5px;background:#7e7e7e"></div>
<div class="a" style="left:-8.5px;top:328.05px;width:21px;height:13.11px;text-align:center;font-size:9.5px;line-height:13.11px;color:#e6e6e6;overflow:hidden;clip-path:inset(0 0 0 8.5px)">16</div>
<div class="a" style="left:0px;top:355.57px;width:13px;height:1.5px;background:#7e7e7e"></div>
<div class="a" style="left:-8.5px;top:342.16px;width:21px;height:13.11px;text-align:center;font-size:9.5px;line-height:13.11px;color:#e6e6e6;overflow:hidden;clip-path:inset(0 0 0 8.5px)">17</div>
<div class="a" style="left:0px;top:369.68px;width:13px;height:1.5px;background:#7e7e7e"></div>
<div class="a" style="left:-8.5px;top:356.27px;width:21px;height:13.11px;text-align:center;font-size:9.5px;line-height:13.11px;color:#e6e6e6;overflow:hidden;clip-path:inset(0 0 0 8.5px)">18</div>
<div class="a" style="left:0px;top:383.79px;width:13px;height:1.5px;background:#7e7e7e"></div>
<div class="a" style="left:-8.5px;top:370.38px;width:21px;height:13.11px;text-align:center;font-size:9.5px;line-height:13.11px;color:#e6e6e6;overflow:hidden;clip-path:inset(0 0 0 8.5px)">19</div>
<div class="a" style="left:0px;top:397.9px;width:13px;height:1.5px;background:#7e7e7e"></div>
<div class="a" style="left:-8.5px;top:384.49px;width:21px;height:13.11px;text-align:center;font-size:9.5px;line-height:13.11px;color:#e6e6e6;overflow:hidden;clip-path:inset(0 0 0 8.5px)">20</div>
<div class="a" style="left:0px;top:412.01px;width:13px;height:1.5px;background:#7e7e7e"></div>
<div class="a" style="left:-8.5px;top:398.60px;width:21px;height:13.11px;text-align:center;font-size:9.5px;line-height:13.11px;color:#e6e6e6;overflow:hidden;clip-path:inset(0 0 0 8.5px)">21</div>
<div class="a" style="left:0px;top:426.12px;width:13px;height:1.5px;background:#7e7e7e"></div>
<div class="a" style="left:-8.5px;top:412.71px;width:21px;height:13.11px;text-align:center;font-size:9.5px;line-height:13.11px;color:#e6e6e6;overflow:hidden;clip-path:inset(0 0 0 8.5px)">22</div>
<div class="a" style="left:0px;top:440.22999999999996px;width:13px;height:1.5px;background:#7e7e7e"></div>
<div class="a" style="left:-8.5px;top:426.82px;width:21px;height:13.11px;text-align:center;font-size:9.5px;line-height:13.11px;color:#e6e6e6;overflow:hidden;clip-path:inset(0 0 0 8.5px)">23</div>
<div class="a" style="left:0px;top:454.34px;width:13px;height:1.5px;background:#7e7e7e"></div>
<div class="a" style="left:-8.5px;top:440.93px;width:21px;height:13.11px;text-align:center;font-size:9.5px;line-height:13.11px;color:#e6e6e6;overflow:hidden;clip-path:inset(0 0 0 8.5px)">24</div>
<div class="a" style="left:0px;top:468.45px;width:13px;height:1.5px;background:#7e7e7e"></div>
<div class="a" style="left:-8.5px;top:455.04px;width:21px;height:13.11px;text-align:center;font-size:9.5px;line-height:13.11px;color:#e6e6e6;overflow:hidden;clip-path:inset(0 0 0 8.5px)">25</div>
<div class="a" style="left:0px;top:482.56px;width:13px;height:1.5px;background:#7e7e7e"></div>
<div class="a" style="left:-8.5px;top:469.15px;width:21px;height:13.11px;text-align:center;font-size:9.5px;line-height:13.11px;color:#e6e6e6;overflow:hidden;clip-path:inset(0 0 0 8.5px)">26</div>
<div class="a" style="left:0px;top:496.67px;width:13px;height:1.5px;background:#7e7e7e"></div>
<div class="a" style="left:-8.5px;top:483.26px;width:21px;height:13.11px;text-align:center;font-size:9.5px;line-height:13.11px;color:#e6e6e6;overflow:hidden;clip-path:inset(0 0 0 8.5px)">27</div>
<div class="a" style="left:0px;top:510.7799999999999px;width:13px;height:1.5px;background:#7e7e7e"></div>
<div class="a" style="left:-8.5px;top:497.37px;width:21px;height:13.11px;text-align:center;font-size:9.5px;line-height:13.11px;color:#e6e6e6;overflow:hidden;clip-path:inset(0 0 0 8.5px)">28</div>
<div class="a" style="left:0px;top:524.89px;width:13px;height:1.5px;background:#7e7e7e"></div>
<div class="a" style="left:-8.5px;top:511.48px;width:21px;height:13.11px;text-align:center;font-size:9.5px;line-height:13.11px;color:#e6e6e6;overflow:hidden;clip-path:inset(0 0 0 8.5px)">29</div>
<div class="a" style="left:0px;top:539.0000000000001px;width:13px;height:1.5px;background:#7e7e7e"></div>
<div class="a" style="left:-8.5px;top:525.59px;width:21px;height:13.11px;text-align:center;font-size:9.5px;line-height:13.11px;color:#e6e6e6;overflow:hidden;clip-path:inset(0 0 0 8.5px)">30</div>
<div class="a" style="left:0px;top:553.11px;width:13px;height:1.5px;background:#7e7e7e"></div>
<div class="a" style="left:-8.5px;top:539.70px;width:21px;height:13.11px;text-align:center;font-size:9.5px;line-height:13.11px;color:#e6e6e6;overflow:hidden;clip-path:inset(0 0 0 8.5px)">31</div>
<div class="a" style="left:0px;top:567.22px;width:13px;height:1.5px;background:#7e7e7e"></div>
<div class="a" style="left:-8.5px;top:553.81px;width:21px;height:13.11px;text-align:center;font-size:9.5px;line-height:13.11px;color:#e6e6e6;overflow:hidden;clip-path:inset(0 0 0 8.5px)">32</div>
<div class="a" style="left:0px;top:581.33px;width:13px;height:1.5px;background:#7e7e7e"></div>
<div class="a" style="left:-8.5px;top:567.92px;width:21px;height:13.11px;text-align:center;font-size:9.5px;line-height:13.11px;color:#e6e6e6;overflow:hidden;clip-path:inset(0 0 0 8.5px)">33</div>
<div class="a" style="left:0px;top:595.44px;width:13px;height:1.5px;background:#7e7e7e"></div>
<div class="a" style="left:-8.5px;top:582.03px;width:21px;height:13.11px;text-align:center;font-size:9.5px;line-height:13.11px;color:#e6e6e6;overflow:hidden;clip-path:inset(0 0 0 8.5px)">34</div>
<div class="a" style="left:0px;top:609.5500000000001px;width:13px;height:1.5px;background:#7e7e7e"></div>
<div class="a" style="left:-8.5px;top:596.14px;width:21px;height:13.11px;text-align:center;font-size:9.5px;line-height:13.11px;color:#e6e6e6;overflow:hidden;clip-path:inset(0 0 0 8.5px)">35</div>
<div class="a" style="left:0px;top:623.66px;width:13px;height:1.5px;background:#7e7e7e"></div>
<div class="a" style="left:-8.5px;top:610.25px;width:21px;height:13.11px;text-align:center;font-size:9.5px;line-height:13.11px;color:#e6e6e6;overflow:hidden;clip-path:inset(0 0 0 8.5px)">36</div>
<div class="a" style="left:0px;top:637.7700000000001px;width:13px;height:1.5px;background:#7e7e7e"></div>
<div class="a" style="left:-8.5px;top:624.36px;width:21px;height:13.11px;text-align:center;font-size:9.5px;line-height:13.11px;color:#e6e6e6;overflow:hidden;clip-path:inset(0 0 0 8.5px)">37</div>
<div class="a" style="left:0px;top:651.88px;width:13px;height:1.5px;background:#7e7e7e"></div>
<div class="a" style="left:-8.5px;top:638.47px;width:21px;height:13.11px;text-align:center;font-size:9.5px;line-height:13.11px;color:#e6e6e6;overflow:hidden;clip-path:inset(0 0 0 8.5px)">38</div>
<div class="a" style="left:11.5px;top:187.55px;width:1.6px;height:13.11px;background:#1f7a45"></div>
<div class="a" style="left:13px;top:117px;width:1085px;height:533.5px;background:#fff"></div>
<div class="t f" style="left:112.0px;top:133.0px;font-size:10px;line-height:10px;color:#1a1a1a;--w:28.5px;">コメント</div>
<svg class="a" style="left:151px;top:145px;" width="7" height="7" viewBox="0 0 7 7"><path d="M0 0 H7 V7 L4.5 4.5 H0 Z" fill="#b95cc8"/></svg>
<div class="a" style="left:254px;top:186px;width:50.2px;height:15.7px;border:2px solid #1f7345"></div>
<div class="a" style="left:301.6px;top:198.9px;width:3.6px;height:3.6px;background:#1f7345"></div>
<div class="t f" style="left:112.5px;top:245.5px;font-size:10px;line-height:10px;color:#1a1a1a;--w:66.0px;">メモ（旧コメント）</div>
<svg class="a" style="left:153px;top:257px;" width="13" height="30" viewBox="0 0 13 30"><path d="M1 1 H6 L4.5 5 Z" fill="#e81010"/><path d="M4 4.5 L11.5 28.5" stroke="#222" stroke-width="0.9"/><path d="M2.6 2.2 L6 2.8 L5 6.2 Z" fill="#111"/></svg>
<div class="a" style="left:164.3px;top:285.4px;width:86.3px;height:53.3px;background:#ffffe1;border:1px solid #555"></div>
<div class="a" style="left:166px;top:287px;font-family:'Liberation Mono',monospace;font-weight:bold;font-size:8.4px;line-height:9px;color:#111;letter-spacing:-0.35px">YUICHI ISHINO:</div>
<div class="a" style="left:1098px;top:114px;width:182px;height:556px;background:#525252"></div>
<div class="a" style="left:1098px;top:117px;width:14px;height:534px;background:#4a4a4a"></div>
<div class="a" style="left:1112px;top:117px;width:1.5px;height:553px;background:#464646"></div>
<div class="a" style="left:1100.2px;top:112px;width:10.7px;height:539.5px;background:#3c3c3c;border-radius:5.5px"></div>
<div class="a" style="left:1102.7px;top:124px;width:6.1px;height:514.8px;background:#c8c8c8;border-radius:3px"></div>
<svg class="a" style="left:1102.7px;top:645px;" width="6.1" height="4.5" viewBox="0 0 6.1 4.5"><path d="M0.3 0.3 H5.8 L3.05 4.2 Z" fill="#d4d4d4"/></svg>
<svg class="a" style="left:1239px;top:114px;" width="10" height="6" viewBox="0 0 10 6"><path d="M0.5 0.5 L5 5 L9.5 0.5" fill="none" stroke="#eee" stroke-width="1"/></svg>
<svg class="a" style="left:1260px;top:113px;" width="9" height="8" viewBox="0 0 9 8"><path d="M1 0 L8 7 M8 0 L1 7" stroke="#eee" stroke-width="1"/></svg>
<div class="a" style="left:1140px;top:129px;width:29px;height:16px;background:#c8c8c8;border-radius:2px"></div>
<div class="t f" style="left:1151.0px;top:133.3px;font-size:8.4px;line-height:8.4px;color:#222;--w:14.0px;">表示</div>
<div class="a" style="left:1172px;top:129px;width:55px;height:16px;background:#c8c8c8;border-radius:2px"></div>
<div class="t f" style="left:1178.0px;top:133.3px;font-size:8.4px;line-height:8.4px;color:#222;--w:43.0px;">すべて非表示</div>
<div class="a" style="left:1237px;top:129px;width:16px;height:16px;background:#c8c8c8;border-radius:2px"></div>
<svg class="a" style="left:1241px;top:134px;" width="8" height="5" viewBox="0 0 8 5"><path d="M1 4 L4 1 L7 4" fill="none" stroke="#333" stroke-width="0.9"/></svg>
<div class="a" style="left:1255px;top:129px;width:16px;height:16px;background:#c8c8c8;border-radius:2px"></div>
<svg class="a" style="left:1259px;top:135px;" width="8" height="5" viewBox="0 0 8 5"><path d="M1 1 L4 4 L7 1" fill="none" stroke="#333" stroke-width="0.9"/></svg>
<div class="t f" style="left:1153.0px;top:158.2px;font-size:9.5px;line-height:9.5px;color:#e8e8e8;--w:27.0px;">ment 1</div>
<svg class="a" style="left:1239px;top:158px;" width="13" height="10" viewBox="0 0 13 10"><path d="M0.8 5.5 Q6.5 -1 12.2 5.5" fill="none" stroke="#e6e6e6" stroke-width="1"/><circle cx="6.5" cy="5.6" r="2.1" fill="none" stroke="#e6e6e6" stroke-width="1"/></svg>
<div class="a" style="left:0px;top:650.5px;width:1098px;height:20px;background:#525252"></div>
<div class="a" style="left:0px;top:650px;width:1098px;height:1.2px;background:#3a3a3a"></div>
<svg class="a" style="left:8px;top:655px;" width="6" height="10" viewBox="0 0 6 10"><path d="M5 1 L1.5 5 L5 9" fill="none" stroke="#c8c8c8" stroke-width="1"/></svg>
<svg class="a" style="left:31px;top:655px;" width="6" height="10" viewBox="0 0 6 10"><path d="M1 1 L4.5 5 L1 9" fill="none" stroke="#c8c8c8" stroke-width="1"/></svg>
<svg class="a" style="left:64px;top:649px;" width="55" height="21" viewBox="0 0 55 21"><path d="M0 1 Q4 1 4 5 V17 Q4 20 7 20 H47 Q50 20 50 17 V5 Q50 1 54 1 V0 H0 Z" fill="#fff"/></svg>
<div class="t f" style="left:75.4px;top:655.5px;font-size:9.5px;line-height:9.5px;color:#333;--w:30.5px;">Sheet1</div>
<div class="a" style="left:74px;top:666px;width:35px;height:1.5px;background:#1f7a3f"></div>
<div class="a" style="left:117px;top:655px;width:1px;height:11px;background:#8a8a8a"></div>
<svg class="a" style="left:144px;top:655px;" width="11" height="11" viewBox="0 0 11 11"><path d="M5.5 1.2 V9.8 M1.2 5.5 H9.8" stroke="#c8c8c8" stroke-width="0.9"/></svg>
<svg class="a" style="left:663px;top:657px;" width="4" height="9" viewBox="0 0 4 9"><rect x="0.8" y="0.5" width="1.6" height="1.6" fill="#ddd"/><rect x="0.8" y="3.5" width="1.6" height="1.6" fill="#ddd"/><rect x="0.8" y="6.5" width="1.6" height="1.6" fill="#ddd"/></svg>
<div class="a" style="left:677px;top:655.4px;width:423px;height:11.4px;background:#3a3a3a;border-radius:6px"></div>
<div class="a" style="left:687.7px;top:658px;width:390.5px;height:6px;background:#c8c8c8;border-radius:3px"></div>
<svg class="a" style="left:680px;top:656.5px;" width="5" height="7.5" viewBox="0 0 5 7.5"><path d="M4.7 0.3 V7.2 L0.2 3.75 Z" fill="#d4d4d4"/></svg>
<svg class="a" style="left:1092px;top:656.5px;" width="5" height="7.5" viewBox="0 0 5 7.5"><path d="M0.3 0.3 V7.2 L4.8 3.75 Z" fill="#d4d4d4"/></svg>
<div class="a" style="left:1011.4px;top:100.5px;width:140px;height:212px;background:#c3c3c3;border:1px solid #9a9a9a;border-radius:4px;box-shadow:1px 2px 4px rgba(0,0,0,.35)"></div>
<div class="a" style="left:1012.4px;top:293px;width:138px;height:18.5px;background:#d6d6d6"></div>
<div class="a" style="left:1033.6px;top:176.8px;width:116px;height:1px;background:#a4a4a4"></div>
<div class="a" style="left:1033.6px;top:272.8px;width:116px;height:1px;background:#a4a4a4"></div>
<div class="t f" style="left:1036.0px;top:105.8px;font-size:8.4px;line-height:8.4px;color:#1e1e1e;--w:35.0px;">検索(<u>F</u>)...</div>
<div class="t f" style="left:1036.0px;top:124.8px;font-size:8.4px;line-height:8.4px;color:#1e1e1e;--w:36.0px;">置換(<u>R</u>)...</div>
<div class="t f" style="left:1036.0px;top:143.8px;font-size:8.4px;line-height:8.4px;color:#1e1e1e;--w:45.0px;">ジャンプ(<u>G</u>)...</div>
<div class="t f" style="left:1036.0px;top:162.8px;font-size:8.4px;line-height:8.4px;color:#1e1e1e;--w:94.0px;">条件を選択してジャンプ(<u>S</u>)...</div>
<div class="t f" style="left:1036.0px;top:182.8px;font-size:8.4px;line-height:8.4px;color:#1e1e1e;--w:28.5px;">数式(<u>U</u>)</div>
<div class="t f" style="left:1036.0px;top:201.8px;font-size:8.4px;line-height:8.4px;color:#1e1e1e;--w:24.5px;">メモ(<u>N</u>)</div>
<div class="t f" style="left:1036.0px;top:220.8px;font-size:8.4px;line-height:8.4px;color:#1e1e1e;--w:59.0px;">条件付き書式(<u>C</u>)</div>
<div class="t f" style="left:1036.0px;top:239.3px;font-size:8.4px;line-height:8.4px;color:#1e1e1e;--w:28.5px;">定数(<u>N</u>)</div>
<div class="t f" style="left:1036.0px;top:258.3px;font-size:8.4px;line-height:8.4px;color:#1e1e1e;--w:70.0px;">データの入力規則(<u>V</u>)</div>
<div class="t f" style="left:1036.0px;top:279.3px;font-size:8.4px;line-height:8.4px;color:#1e1e1e;--w:70.0px;">オブジェクトの選択(<u>O</u>)</div>
<div class="t f" style="left:1036.0px;top:297.8px;font-size:8.4px;line-height:8.4px;color:#1e1e1e;--w:98.0px;">オブジェクトの選択と表示(<u>P</u>)...</div>
<svg class="a" style="left:1020px;top:104px;" width="12" height="12" viewBox="0 0 12 12"><circle cx="7" cy="4.5" r="3.6" fill="#ececec" stroke="#444" stroke-width="0.9"/><path d="M4.5 7 L1 10.5" stroke="#444" stroke-width="1"/></svg>
<svg class="a" style="left:1019px;top:122px;" width="13" height="13" viewBox="0 0 13 13"><text x="5" y="6" font-size="7.5" font-weight="bold" font-family="Liberation Sans" fill="#c03098">b</text><text x="6.5" y="12.8" font-size="7" font-weight="bold" font-family="Liberation Sans" fill="#2d6fc0">c</text><path d="M3.2 2.5 Q0.3 4.5 1.5 8 Q2.3 9.5 4.5 9.5 M3 7.8 L4.8 9.5 L3 11.2" fill="none" stroke="#2d6fc0" stroke-width="1.2"/></svg>
<svg class="a" style="left:1019px;top:143px;" width="12" height="10" viewBox="0 0 12 10"><path d="M1 5 H10.5 M7 1.5 L10.5 5 L7 8.5" fill="none" stroke="#2d6fc0" stroke-width="1"/></svg>
<svg class="a" style="left:1020px;top:277px;" width="9" height="12" viewBox="0 0 9 12"><path d="M1 1 V10 L3.3 7.8 L5 11 L6.3 10.3 L4.8 7.2 H8 Z" fill="#eee" stroke="#555" stroke-width="0.8"/></svg>
<svg class="a" style="left:1018.5px;top:295px;" width="14" height="14" viewBox="0 0 14 14"><rect x="0.5" y="0.5" width="13" height="13" fill="#f2f2f2" stroke="#666" stroke-width="1"/><rect x="6.3" y="1.8" width="5.8" height="5" fill="#f2c040" stroke="#b08a20" stroke-width="0.4"/><path d="M1.5 7.6 H6 M1.5 2 V12.5" stroke="#999" stroke-width="0.6"/><path d="M7.5 7.8 V13 L8.8 11.8 L9.8 13.4 L10.6 13 L9.7 11.3 H11.6 Z" fill="#fff" stroke="#333" stroke-width="0.6"/></svg>
<div class="a" style="left:879.4px;top:293.2px;width:132.6px;height:96.3px;background:#efefef;border:1px solid #8f8f8f;border-radius:3px;box-shadow:1px 2px 4px rgba(0,0,0,.25)"></div>
<div class="t f" style="left:887.0px;top:298.8px;font-size:8.4px;line-height:8.4px;color:#222;font-weight:bold;--w:81.0px;">[選択] ウィンドウの表示</div>
<div class="t f" style="left:887.0px;top:312.3px;font-size:8.4px;line-height:8.4px;color:#333;--w:113.0px;">すべてのオブジェクトを一覧形式で表</div>
<div class="t f" style="left:887.0px;top:322.3px;font-size:8.4px;line-height:8.4px;color:#333;--w:37.0px;">示します。</div>
<div class="t f" style="left:887.0px;top:342.8px;font-size:8.4px;line-height:8.4px;color:#333;--w:116.0px;">この形式で表示すると、オブジェクトの</div>
<div class="t f" style="left:887.0px;top:352.8px;font-size:8.4px;line-height:8.4px;color:#333;--w:115.0px;">選択や色の変更を行ったり、オブジェ</div>
<div class="t f" style="left:887.0px;top:362.8px;font-size:8.4px;line-height:8.4px;color:#333;--w:116.0px;">クトを非表示にしたりする操作が簡単</div>
<div class="t f" style="left:887.0px;top:372.8px;font-size:8.4px;line-height:8.4px;color:#333;--w:37.0px;">になります。</div>
<script>
(function(){var els=document.querySelectorAll('.f');for(var i=0;i<els.length;i++){var e=els[i];var w=parseFloat(getComputedStyle(e).getPropertyValue('--w'));var r=e.getBoundingClientRect().width;if(w>0&&r>0){e.style.transform='scaleX('+(w/r)+')';}}})();
</script>
</body></html>
